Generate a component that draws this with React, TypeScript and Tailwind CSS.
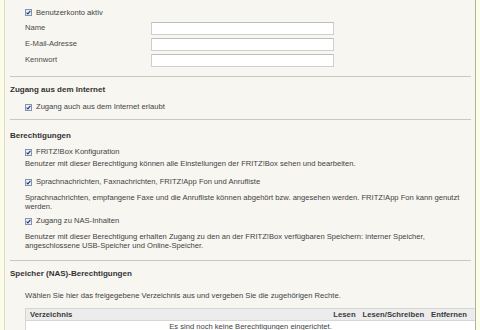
import React from "react";

const Check = () => (
  <span className="inline-flex w-[7px] h-[7px] border border-[#8593b0] bg-[#e8edf5] items-center justify-center shrink-0">
    <svg width="5" height="5" viewBox="0 0 5 5">
      <path d="M0.6 2.6 L1.9 3.9 L4.4 0.8" stroke="#1f3a78" strokeWidth="1.1" fill="none" />
    </svg>
  </span>
);

const CheckRow = ({ label, cls }: { label: string; cls: string }) => (
  <div className={"flex items-center h-[12px] pl-[20px] gap-[4px] " + cls}>
    <Check />
    <span>{label}</span>
  </div>
);

const Sep = ({ cls }: { cls: string }) => (
  <div className={"h-px bg-[#c9c9c2] ml-[5px] mr-[4px] " + cls} />
);

const InputRow = ({ label }: { label: string }) => (
  <div className="flex items-center h-[16px] pl-[20px]">
    <span className="w-[126px] text-[#4a4a4a]">{label}</span>
    <div className="w-[183px] h-[13px] bg-white border border-[#cfcfcf] border-t-[#bdbdbd]" />
  </div>
);

export default function App() {
  return (
    <div
      className="w-[480px] h-[330px] overflow-hidden bg-[#fdfce6] flex pl-[4px] pr-[4px] text-[7.6px] text-[#424242] whitespace-nowrap"
      style={{ fontFamily: '"Liberation Sans", Arial, sans-serif' }}
    >
      <div className="flex-1 min-w-0 overflow-hidden bg-[#f8f6f1] border-l border-l-[#dcdccc] border-r border-r-[#a9b5a0] flex flex-col [&>*]:shrink-0">
        <div className="flex items-center h-[15px] mt-[5px] pl-[20px] gap-[4px]">
          <Check />
          <span>Benutzerkonto aktiv</span>
        </div>
        <InputRow label="Name" />
        <InputRow label="E-Mail-Adresse" />
        <InputRow label="Kennwort" />

        <Sep cls="mt-[8px]" />
        <div className="h-[12px] leading-[12px] mt-[7px] pl-[5px] font-bold text-[8px] text-[#333]">Zugang aus dem Internet</div>
        <CheckRow label="Zugang auch aus dem Internet erlaubt" cls="mt-[5px]" />

        <Sep cls="mt-[6px]" />
        <div className="h-[12px] leading-[12px] mt-[10px] pl-[5px] font-bold text-[8px] text-[#333]">Berechtigungen</div>
        <CheckRow label="FRITZ!Box Konfiguration" cls="mt-[4px]" />
        <div className="leading-[10px] mt-[1px] pl-[20px]">
          Benutzer mit dieser Berechtigung können alle Einstellungen der FRITZ!Box sehen und bearbeiten.
        </div>
        <CheckRow label="Sprachnachrichten, Faxnachrichten, FRITZ!App Fon und Anrufliste" cls="mt-[7px]" />
        <div className="leading-[9px] mt-[5px] pl-[20px]">
          Sprachnachrichten, empfangene Faxe und die Anrufliste können abgehört bzw. angesehen werden. FRITZ!App Fon kann genutzt
          <br />
          werden.
        </div>
        <CheckRow label="Zugang zu NAS-Inhalten" cls="mt-[4px]" />
        <div className="leading-[9px] mt-[5px] pl-[20px]">
          Benutzer mit dieser Berechtigung erhalten Zugang zu den an der FRITZ!Box verfügbaren Speichern: interner Speicher,
          <br />
          angeschlossene USB-Speicher und Online-Speicher.
        </div>

        <Sep cls="mt-[10px]" />
        <div className="h-[12px] leading-[12px] mt-[7px] pl-[5px] font-bold text-[8px] text-[#333]">Speicher (NAS)-Berechtigungen</div>
        <div className="h-[12px] leading-[12px] mt-[10px] pl-[20px]">
          Wählen Sie hier das freigegebene Verzeichnis aus und vergeben Sie die zugehörigen Rechte.
        </div>
        <div className="mt-[6px] ml-[20px] border border-r-0 border-[#d6d6d6] bg-white">
          <div className="flex items-center h-[12px] bg-[#ececec] pl-[4px] pr-[8px] font-bold text-[7.7px] text-[#3a3a3a] border-b border-[#d6d6d6]">
            <span className="flex-1">Verzeichnis</span>
            <span className="mr-[7px]">Lesen</span>
            <span className="mr-[7px]">Lesen/Schreiben</span>
            <span>Entfernen</span>
          </div>
          <div className="h-[12px] leading-[12px] text-center">Es sind noch keine Berechtigungen eingerichtet.</div>
        </div>
      </div>
    </div>
  );
}
